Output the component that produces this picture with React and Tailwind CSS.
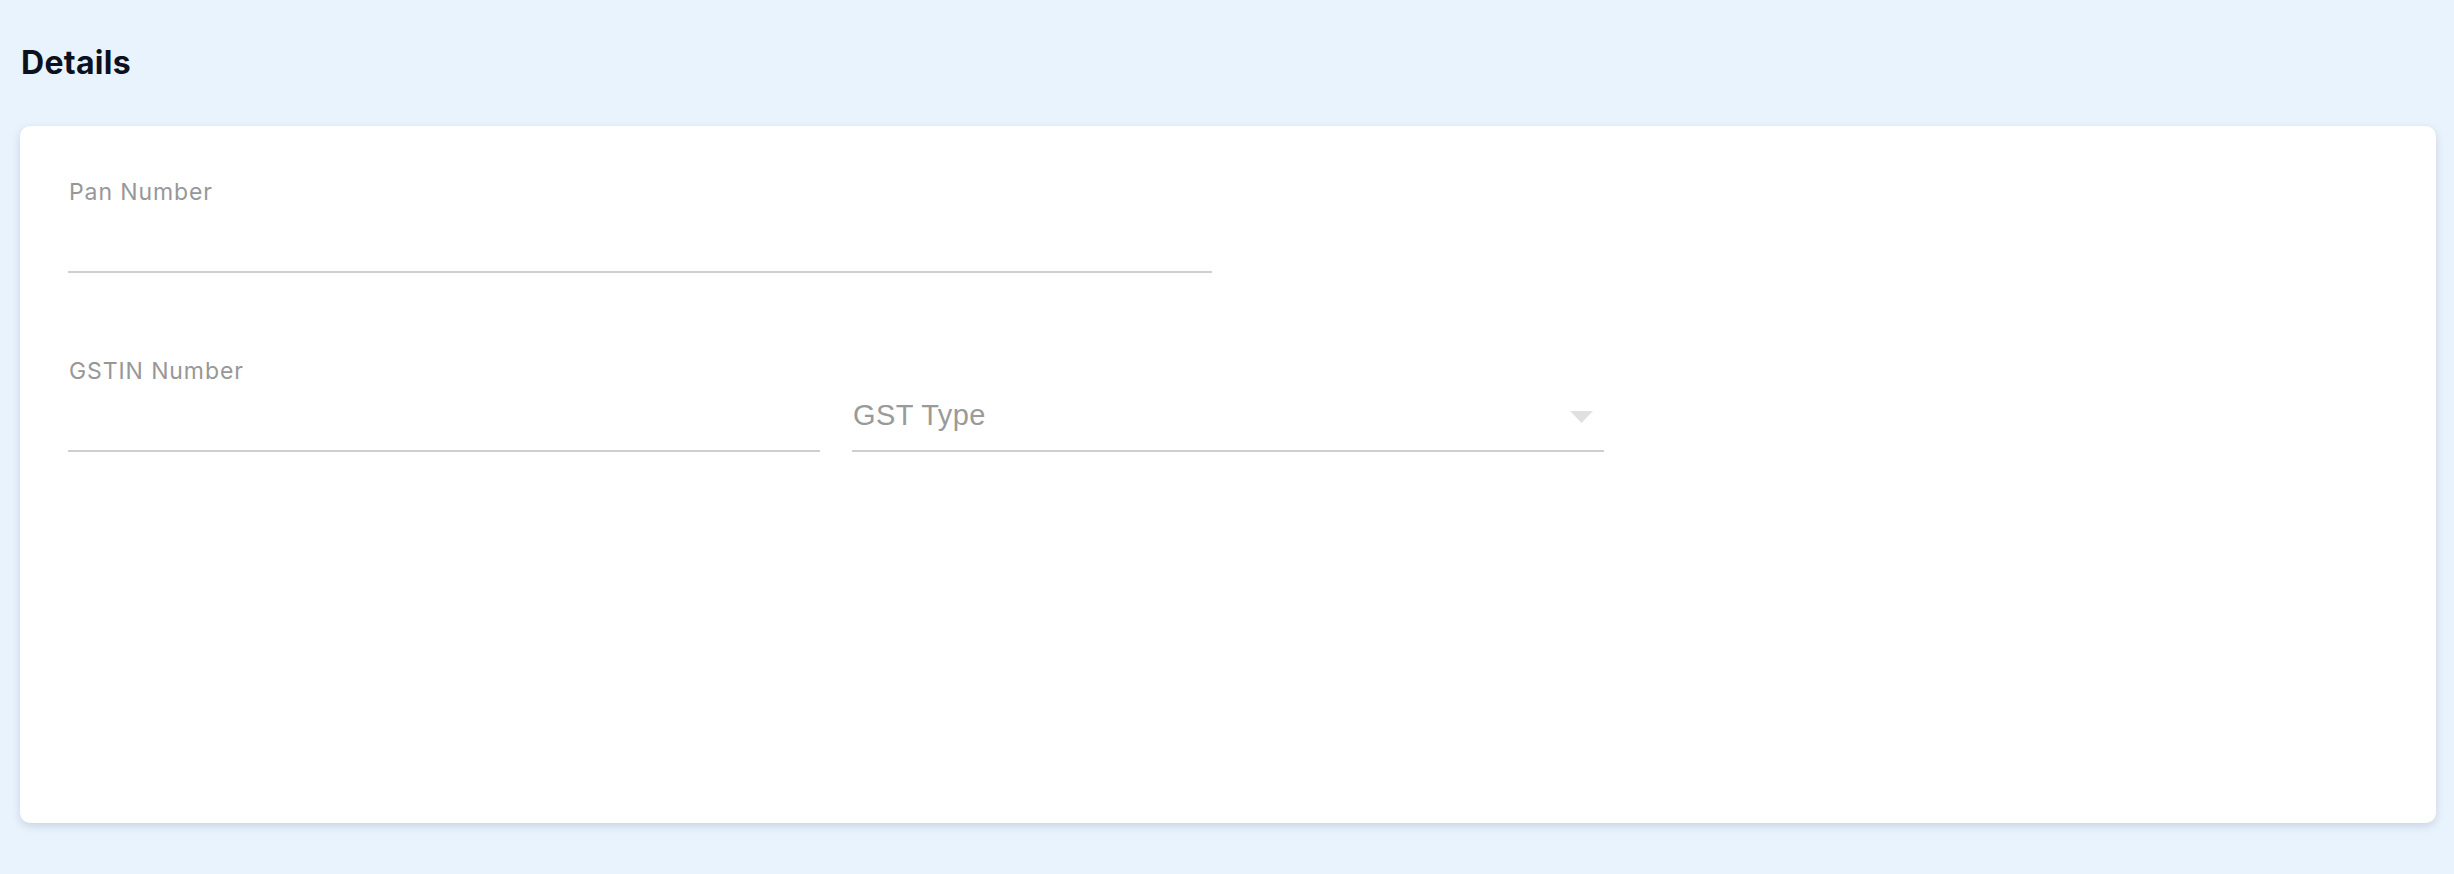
export default function App() {
  return (
    <div className="w-[2454px] h-[874px] bg-[#e9f3fd] px-[20px] pt-[44px] overflow-hidden" style={{ fontFamily: "Inter, 'Liberation Sans', sans-serif" }}>
      <h1 className="text-[32px] leading-[38px] font-bold text-[#0b1120] pl-[1px] tracking-[0.3px]">Details</h1>
      <div className="mt-[44px] w-[2416px] h-[697px] bg-white rounded-[10px] shadow-[0_3px_8px_rgba(30,50,80,0.16)] px-[48px] pt-[52px]">
        <div className="w-[1144px]">
          <label className="block text-[23px] leading-[28px] tracking-[0.9px] text-[#979797] pl-[1px]">Pan Number</label>
          <div className="h-[67px] border-b-2 border-[#cfcfcf]"></div>
        </div>
        <div className="mt-[84px] flex items-end gap-[32px]">
          <div className="w-[752px]">
            <label className="block text-[23px] leading-[28px] tracking-[0.9px] text-[#979797] pl-[1px]">GSTIN Number</label>
            <div className="h-[67px] border-b-2 border-[#cfcfcf]"></div>
          </div>
          <div className="w-[752px] border-b-2 border-[#cfcfcf] pb-[20px] flex items-center justify-between pr-[11px]">
            <span className="text-[29px] leading-[30px] tracking-[0.4px] text-[#9a9a9a] pl-[1px]" style={{ fontFamily: "'Liberation Sans', Arial, sans-serif" }}>GST Type</span>
            <svg width="23" height="12" viewBox="0 0 23 12" className="mt-[3px]">
              <polygon points="0,0 23,0 11.5,12" fill="#e0e0e0" />
            </svg>
          </div>
        </div>
      </div>
    </div>
  );
}
